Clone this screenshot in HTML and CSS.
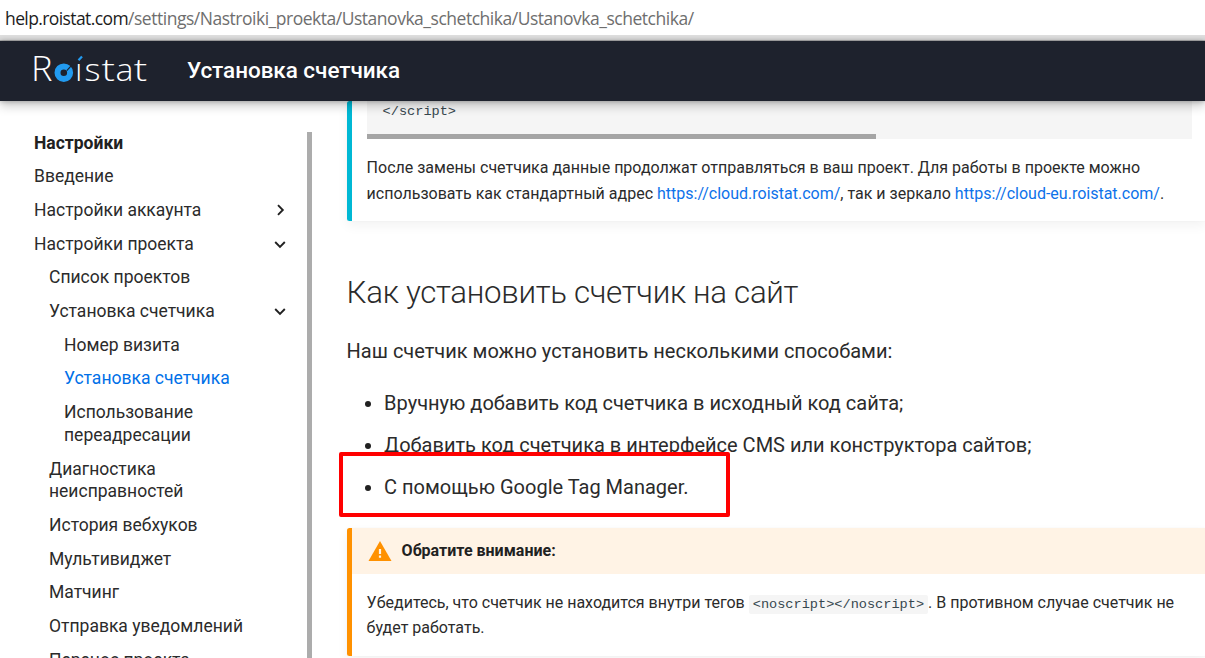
FILE: index.html
```html
<!DOCTYPE html>
<html lang="ru">
<head>
<meta charset="utf-8">
<title>Установка счетчика</title>
<link rel="stylesheet" href="styles.css">
</head>
<body>
<div class="address"><span class="url"><b>help.roistat.com</b>/settings/Nastroiki_proekta/Ustanovka_schetchika/Ustanovka_schetchika/</span></div>
<header class="header">
  <svg class="logo" width="120" height="56" viewBox="0 -8 120 56" role="img" aria-label="Roistat">
    <g class="logo-text">
      <text x="0" y="30" textLength="21.500" lengthAdjust="spacingAndGlyphs" class="logo-cap">R</text>
      <text x="44.200" y="30">ı</text>
      <text x="53.500" y="30" textLength="16" lengthAdjust="spacingAndGlyphs">s</text>
      <text x="70.500" y="30" textLength="13.500" lengthAdjust="spacingAndGlyphs">t</text>
      <text x="84.500" y="30" textLength="18" lengthAdjust="spacingAndGlyphs">a</text>
      <text x="102.800" y="30" textLength="13.500" lengthAdjust="spacingAndGlyphs">t</text>
    </g>
    <circle class="logo-ring" cx="32.800" cy="21.700" r="6.300"/>
    <path class="logo-gap" d="M35.800 19.700l5-5.500"/>
    <path class="logo-accent" d="M47.500 9.300l3.500-3.800"/>
  </svg>
  <span class="title">Установка счетчика</span>
</header>
<div class="page">
  <nav class="sidebar">
    <ul class="nav">
      <li class="nav-title">Настройки</li>
      <li>Введение</li>
      <li class="branch">Настройки аккаунта<svg class="chev" viewBox="0 0 12 12"><path d="M4 1.200L8.800 6 4 10.800"/></svg></li>
      <li class="branch">Настройки проекта<svg class="chev" viewBox="0 0 12 12"><path d="M1.200 4L6 8.800 10.800 4"/></svg></li>
      <li class="l2">Список проектов</li>
      <li class="l2 branch">Установка счетчика<svg class="chev" viewBox="0 0 12 12"><path d="M1.200 4L6 8.800 10.800 4"/></svg></li>
      <li class="l3">Номер визита</li>
      <li class="l3 active">Установка счетчика</li>
      <li class="l3">Использование<br>переадресации</li>
      <li class="l2">Диагностика<br>неисправностей</li>
      <li class="l2">История вебхуков</li>
      <li class="l2">Мультивиджет</li>
      <li class="l2">Матчинг</li>
      <li class="l2">Отправка уведомлений</li>
      <li class="l2">Перенос проекта</li>
    </ul>
  </nav>
  <main class="content">
    <section class="note info">
      <pre class="code">&lt;/script&gt;</pre>
      <p>После замены счетчика данные продолжат отправляться в ваш проект. Для работы в проекте можно<br>использовать как стандартный адрес <a>https://cloud.roistat.com/</a>, так и зеркало <a>https://cloud-eu.roistat.com/</a>.</p>
    </section>
    <h2>Как установить счетчик на сайт</h2>
    <p class="lead">Наш счетчик можно установить несколькими способами:</p>
    <ul class="ways">
      <li>Вручную добавить код счетчика в исходный код сайта;</li>
      <li>Добавить код счетчика в интерфейсе CMS или конструктора сайтов;</li>
      <li class="marked">С помощью Google Tag Manager.</li>
    </ul>
    <section class="note warning">
      <div class="note-title"><svg class="warn" viewBox="0 0 24 20"><path d="M12 0L23.500 20H.5z"/><path class="bang" d="M12 8v5M12 14.500v2.300"/></svg>Обратите внимание:</div>
      <p>Убедитесь, что счетчик не находится внутри тегов <code>&lt;noscript&gt;&lt;/noscript&gt;</code>. В противном случае счетчик не<br>будет работать.</p>
    </section>
  </main>
</div>
</body>
</html>
```
FILE: styles.css
```css
*, *::before, *::after { box-sizing: border-box; }
body { margin: 0; height: 658px; overflow: hidden; background: #fff; color: #2b2b2b; font-family: Roboto, sans-serif; display: flex; flex-direction: column; }
ul { list-style: none; margin: 0; padding: 0; }
p { margin: 0; }
a { color: #0d72ea; }

.address { flex: none; height: 41px; padding: 5px 0 0 5px; border-bottom: 1px solid #b5b5b5; box-shadow: inset 0 -5px #dedede; font: 17.5px/26px "Open Sans", sans-serif; letter-spacing: -.480px; color: #6e6e6e; white-space: nowrap; }
.address b { font-weight: 400; letter-spacing: -.6px; color: #1c1c1c; }

.header { flex: none; height: 60px; padding-left: 31px; display: flex; align-items: center; background: #1e222d; color: #fff; position: relative; z-index: 2; box-shadow: 0 0 5px rgba(0,0,0,.3), 0 5px 10px rgba(0,0,0,.2); }
.logo { display: block; margin-right: 36px; overflow: visible; }
.logo-text { fill: #fff; font: 300 31px "Open Sans", sans-serif; }
.logo-cap { font-size: 34px; }
.logo-ring { fill: none; stroke: #229bf0; stroke-width: 6; }
.logo-gap { stroke: #1e222d; stroke-width: 1.200; }
.logo-accent { stroke: #229bf0; stroke-width: 2.200; }
.title { font-size: 22.500px; font-weight: 500; line-height: 58px; padding-bottom: 2px; letter-spacing: -.05px; }

.page { flex: 1; min-height: 0; display: flex; }
.sidebar { flex: none; width: 312px; margin-top: 31px; padding-left: 34px; border-right: 5px solid #acacac; overflow: hidden; }
.nav { font-size: 17.500px; line-height: 22.750px; }
.nav li { margin-top: 10.940px; white-space: nowrap; }
.nav .nav-title { font-weight: 700; margin: 0 0 -.45px; color: #212121; }
.nav .l2 { padding-left: 15px; }
.nav .l3 { padding-left: 30px; }
.nav .active { color: #0070e8; }
.branch { display: flex; align-items: center; justify-content: space-between; padding-right: 21px; }
.chev { width: 12px; height: 12px; fill: none; stroke: #212121; stroke-width: 1.900; }

.content { flex: none; width: 859px; margin-left: 34.600px; }
.note { border-left: 5px solid #00b8d4; border-radius: 2.500px; font-size: 16px; line-height: 25.600px; box-shadow: 0 5px 12px rgba(0,0,0,.05), 0 0 1px rgba(0,0,0,.1); white-space: nowrap; }
.info { height: 120px; padding: 0 13px 0 15px; }
.code { height: 38px; margin: 0 0 16px; padding: 1px 16px 0; width: 825px; background: linear-gradient(#a5a5a5, #a5a5a5) 0 100% / 509px 5px no-repeat #f5f5f5; color: #37474f; font: 13.600px/20px "Liberation Mono", monospace; }
h2 { margin: 47px 0 0; font-size: 31.250px; line-height: 50px; font-weight: 300; letter-spacing: -.01em; }
.lead { margin-top: 17px; font-size: 20px; line-height: 32px; }
.ways { margin-top: 20px; font-size: 20px; line-height: 32px; }
.ways li { margin: 0 0 10px; padding-left: 37.500px; position: relative; white-space: nowrap; }
.ways li::before { content: ""; position: absolute; left: 18px; top: 14px; width: 6px; height: 6px; border-radius: 50%; background: #212121; }
.ways .marked::after { content: ""; position: absolute; left: -8px; top: -19px; width: 391px; height: 65px; border: 4px solid #f00; border-radius: 2px; }
.warning { margin-top: 25px; height: 128px; border-left-color: #ff9100; }
.note-title { height: 46px; padding-left: 16px; display: flex; align-items: center; gap: 10px; background: #fff3e5; font-weight: 700; color: #212121; }
.warn { width: 24px; height: 20px; margin-top: -1px; fill: #ff9100; }
.bang { stroke: #fff3e5; stroke-width: 2.200; }
.warning p { padding: 16px 0 0 15px; line-height: 25.300px; }
code { padding: 2px 4px; border-radius: 2px; background: #f5f5f5; color: #37474f; font: 13.600px "Liberation Mono", monospace; }
```
